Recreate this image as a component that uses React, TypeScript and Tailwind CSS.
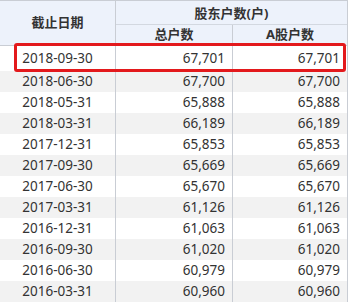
const rows: [string, string, string][] = [
  ['2018-09-30', '67,701', '67,701'],
  ['2018-06-30', '67,700', '67,700'],
  ['2018-05-31', '65,888', '65,888'],
  ['2018-03-31', '66,189', '66,189'],
  ['2017-12-31', '65,853', '65,853'],
  ['2017-09-30', '65,669', '65,669'],
  ['2017-06-30', '65,670', '65,670'],
  ['2017-03-31', '61,126', '61,126'],
  ['2016-12-31', '61,063', '61,063'],
  ['2016-09-30', '61,020', '61,020'],
  ['2016-06-30', '60,979', '60,979'],
  ['2016-03-31', '60,960', '60,960'],
];

const font = { fontFamily: '"Noto Sans", "Noto Sans CJK SC", sans-serif' };

export default function App() {
  return (
    <div className="relative w-[352px] h-[302px] overflow-hidden bg-white text-[#333]" style={font}>
      <div className="w-[348px]">
        {/* header */}
        <div className="flex h-[46px] bg-[#edf2fb] border-t border-b border-[#c9cdd4] font-bold text-[13px]">
          <div className="w-[116px] flex items-center justify-center border-r border-[#c9cdd4]">截止日期</div>
          <div className="flex-1 flex flex-col border-r border-[#c9cdd4]">
            <div className="h-[24px] pt-[2px] flex items-center justify-center border-b border-[#d3d8e0]">股东户数(户)</div>
            <div className="flex-1 flex">
              <div className="w-[117px] flex items-center justify-center border-r border-[#c9cdd4]">总户数</div>
              <div className="flex-1 flex items-center justify-center">A股户数</div>
            </div>
          </div>
        </div>
        {/* body */}
        {rows.map(([d, a, b], i) => (
          <div
            key={d}
            className={`flex text-[13.5px] ${i === 0 ? 'h-[25px]' : 'h-[21px]'} ${i % 2 === 1 ? 'bg-[#f2f2f2]' : 'bg-white'}`}
          >
            <div className="w-[116px] flex items-center justify-center border-r border-[#c9cdd4]">{d}</div>
            <div className="w-[117px] flex items-center justify-end pr-[7px] border-r border-[#c9cdd4]">{a}</div>
            <div className="flex-1 flex items-center justify-end pr-[7px] border-r border-[#c9cdd4]">{b}</div>
          </div>
        ))}
      </div>
      {/* highlight box */}
      <div className="absolute left-[14px] top-[43px] w-[332px] h-[29px] border-[3px] border-[#e3191c] rounded-[3px]" />
    </div>
  );
}
